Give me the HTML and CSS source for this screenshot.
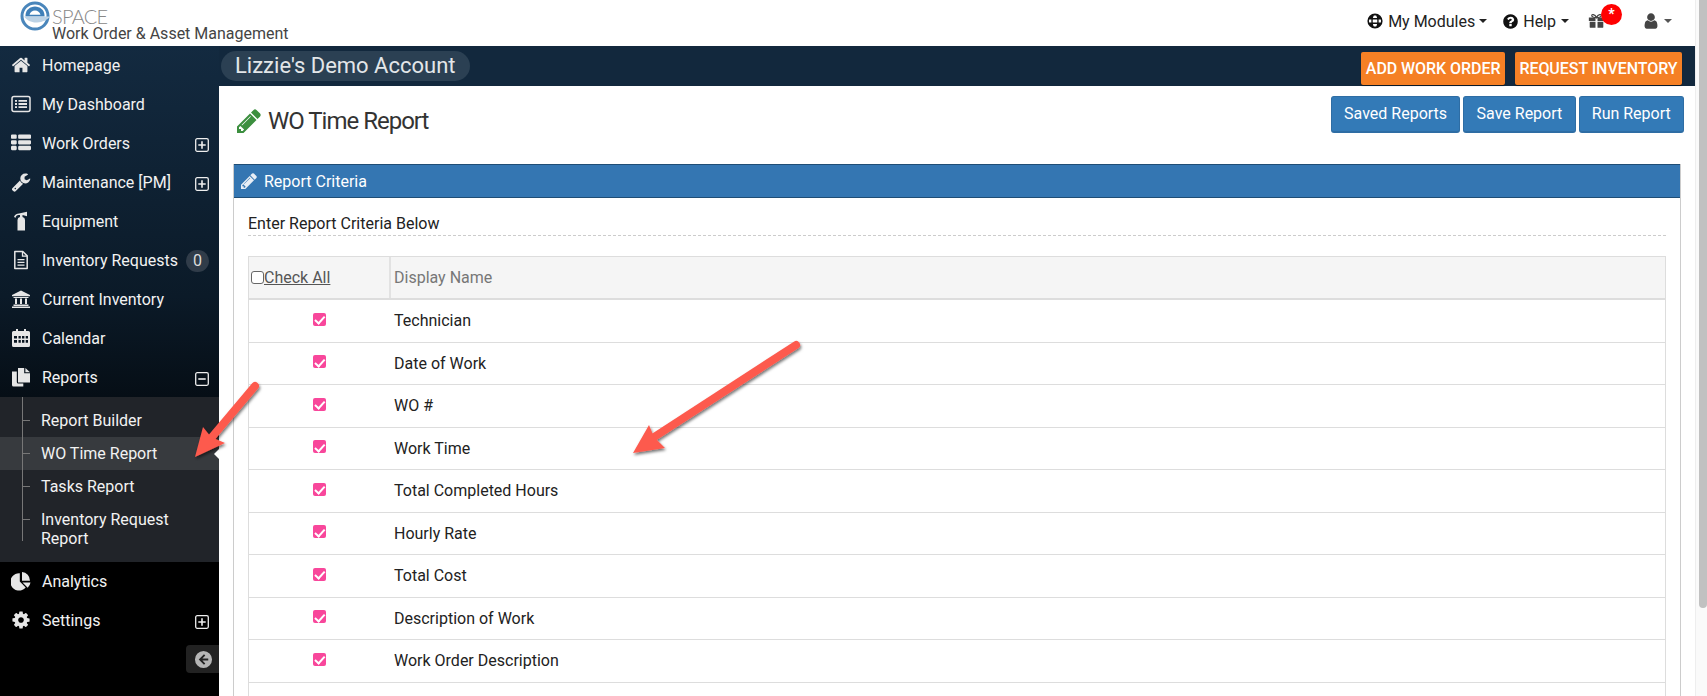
FILE: index.html
```html
<!DOCTYPE html>
<html lang="en">
<head>
<meta charset="utf-8">
<title>WO Time Report</title>
<link rel="stylesheet" href="styles.css">
</head>
<body>
<svg class="sprite" xmlns="http://www.w3.org/2000/svg">
  <symbol id="i-pencil" viewBox="128 128 1536 1536"><path d="M491 1536l91-91-235-235-91 91v107h128v128h107zm523-928q0-22-22-22-10 0-17 7l-542 542q-7 7-7 17 0 22 22 22 10 0 17-7l542-542q7-7 7-17zm-54-192l416 416-832 832h-416v-416zm683 96q0 53-37 90l-166 166-416-416 166-165q36-38 90-38 53 0 91 38l235 234q37 39 37 91z"/></symbol>
  <symbol id="i-home" viewBox="0 0 1792 1792"><path d="M1472 992v480q0 26-19 45t-45 19h-384v-384h-256v384h-384q-26 0-45-19t-19-45v-480q0-1 .5-3t.5-3l575-474 575 474q1 2 1 6zm223-69l-62 74q-8 9-21 11h-3q-13 0-21-7l-692-577-692 577q-12 8-24 7-13-2-21-11l-62-74q-8-10-7-23.500t11-21.500l719-599q32-26 76-26t76 26l244 204v-195q0-14 9-23t23-9h192q14 0 23 9t9 23v408l219 182q10 8 11 21.500t-7 23.500z"/></symbol>
  <symbol id="i-list" viewBox="0 0 1792 1792"><path d="M512 1248v192q0 40-28 68t-68 28h-320q-40 0-68-28t-28-68v-192q0-40 28-68t68-28h320q40 0 68 28t28 68zm0-512v192q0 40-28 68t-68 28h-320q-40 0-68-28t-28-68v-192q0-40 28-68t68-28h320q40 0 68 28t28 68zm1280 512v192q0 40-28 68t-68 28h-960q-40 0-68-28t-28-68v-192q0-40 28-68t68-28h960q40 0 68 28t28 68zm-1280-1024v192q0 40-28 68t-68 28h-320q-40 0-68-28t-28-68v-192q0-40 28-68t68-28h320q40 0 68 28t28 68zm1280 512v192q0 40-28 68t-68 28h-960q-40 0-68-28t-28-68v-192q0-40 28-68t68-28h960q40 0 68 28t28 68zm0-512v192q0 40-28 68t-68 28h-960q-40 0-68-28t-28-68v-192q0-40 28-68t68-28h960q40 0 68 28t28 68z"/></symbol>
  <symbol id="i-wrench" viewBox="0 0 1792 1792"><path d="M448 1472q0-26-19-45t-45-19-45 19-19 45 19 45 45 19 45-19 19-45zm644-420l-682 682q-37 37-90 37-52 0-91-37l-106-108q-38-36-38-90 0-53 38-91l681-681q39 98 114.500 173.500t173.500 114.500zm634-435q0 39-23 106-47 134-164.500 217.500t-258.500 83.500q-185 0-316.500-131.500t-131.500-316.500 131.500-316.500 316.500-131.500q58 0 121.500 16.500t107.500 46.500q16 11 16 28t-16 28l-293 169v224l193 107q5-3 79-48.500t135.500-81 70.500-35.500q15 0 23.500 10t8.500 25z"/></symbol>
  <symbol id="i-gear" viewBox="0 0 1792 1792"><path d="M1152 896q0-106-75-181t-181-75-181 75-75 181 75 181 181 75 181-75 75-181zm512-109v222q0 12-8 23t-20 13l-185 28q-19 54-39 91 35 50 107 138 10 12 10 25t-9 23q-27 37-99 108t-94 71q-12 0-26-9l-138-108q-44 23-91 38-16 136-29 186-7 28-36 28h-222q-14 0-24.500-8.500t-11.500-21.500l-28-184q-49-16-90-37l-141 107q-10 9-25 9-14 0-25-11-126-114-165-168-7-10-7-23 0-12 8-23 15-21 51-66.500t54-70.500q-27-50-41-99l-183-27q-13-2-21-12.500t-8-23.500v-222q0-12 8-23t19-13l186-28q14-46 39-92-40-57-107-138-10-12-10-24 0-10 9-23 26-36 98.500-107.500t94.500-71.500q13 0 26 10l138 107q44-23 91-38 16-136 29-186 7-28 36-28h222q14 0 24.500 8.500t11.500 21.500l28 184q49 16 90 37l142-107q9-9 24-9 13 0 25 10 129 119 165 170 7 8 7 22 0 12-8 23-15 21-51 66.500t-54 70.500q26 50 41 98l183 28q13 2 21 12.500t8 23.500z"/></symbol>
  <symbol id="i-user" viewBox="0 0 1792 1792"><path d="M1536 1399q0 109-62.500 187t-150.500 78h-854q-88 0-150.500-78t-62.500-187q0-85 8.500-160.500t31.500-152 58.500-131 94-89 134.500-34.500q131 128 313 128t313-128q76 0 134.500 34.500t94 89 58.500 131 31.500 152 8.500 160.500zm-256-887q0 159-112.500 271.500t-271.500 112.500-271.500-112.500-112.500-271.500 112.500-271.500 271.500-112.500 271.500 112.500 112.500 271.500z"/></symbol>
  <symbol id="i-help" viewBox="0 0 1792 1792"><path d="M1024 1376v-192q0-14-9-23t-23-9h-192q-14 0-23 9t-9 23v192q0 14 9 23t23 9h192q14 0 23-9t9-23zm256-672q0-88-55.500-163t-138.500-116-170-41q-243 0-371 213-15 24 8 42l132 100q7 6 19 6 16 0 25-12 53-68 86-92 34-24 86-24 48 0 85.500 26t37.500 59q0 38-20 61t-68 45q-63 28-115.500 86.500t-52.500 125.500v36q0 14 9 23t23 9h192q14 0 23-9t9-23q0-19 21.500-49.500t54.500-49.500q32-18 49-28.500t46-35 44.500-48 28-60.500 12.500-81zm384 192q0 209-103 385.500t-279.500 279.500-385.500 103-385.500-103-279.500-279.500-103-385.500 103-385.500 279.500-279.500 385.500-103 385.500 103 279.500 279.500 103 385.500z"/></symbol>
  <symbol id="i-dash" viewBox="0 0 20 20"><rect x="1" y="2.600" width="18" height="14.800" rx="2" fill="none" stroke="currentColor" stroke-width="1.500"/><path d="M4 6h2v1.800H4zm3.500 0H16v1.800H7.500zM4 9.100h2v1.800H4zm3.500 0H16v1.800H7.500zM4 12.200h2V14H4zm3.500 0H16V14H7.500z"/></symbol>
  <symbol id="i-ext" viewBox="0 0 20 20"><path d="M8 2.600 16 .8v4.400l-4.500-1.100 0 2a3 3 0 0 1 2.500 3V19.500H6.500V9.100a3 3 0 0 1 2.500-3V4.100L7.500 4C6 4 5 5 4.300 7L3 5.800C4 3.500 6 2.700 8 2.600z"/></symbol>
  <symbol id="i-file" viewBox="0 0 20 20"><path fill="none" stroke="currentColor" stroke-width="1.500" stroke-linejoin="round" d="M3.800 1.500h8l4.400 4.400v12.600H3.800z"/><path fill="none" stroke="currentColor" stroke-width="1.300" d="M11.500 1.500v4.700h4.700"/><path d="M6.500 9h7v1.300h-7zm0 2.700h7V13h-7zm0 2.700h7v1.300h-7z"/></symbol>
  <symbol id="i-bank" viewBox="0 0 20 20"><path d="M10 1.500 19 6v1.300H1V6zM2.500 8h15v1h-15zM4 9.500h2V15H4zm5 0h2V15H9zm5 0h2V15h-2zM2.500 15.500h15V17h-15zM1 17.400h18V19H1z"/></symbol>
  <symbol id="i-cal" viewBox="0 0 20 20"><path fill-rule="evenodd" d="M5 1h2v2h6V1h2v2h2.500A1.500 1.500 0 0 1 19 4.500v13a1.500 1.500 0 0 1-1.500 1.500h-15A1.500 1.500 0 0 1 1 17.500v-13A1.500 1.500 0 0 1 2.500 3H5zM3 8v2.500h3V8zm4.500 0v2.500h2.300V8zm3.500 0v2.500h2.400V8zm3.700 0v2.500H17V8zM3 12v2.700h3V12zm4.500 0v2.700h2.300V12zm3.500 0v2.700h2.400V12zm3.700 0v2.700H17V12z"/></symbol>
  <symbol id="i-copy" viewBox="0 0 20 20"><path d="M1 4.500h4.800V15a1.500 1.500 0 0 0 1.500 1.500h5V19.500H2.500A1.500 1.500 0 0 1 1 18z"/><path d="M7 1h6.200v5.300H19V15.500H7z"/><path d="M14.400 1 19 5.200h-4.600z"/></symbol>
  <symbol id="i-pie" viewBox="0 0 20 20"><path d="M8.800 2.200v8.400l5.900 5.900A8.700 8.700 0 1 1 8.800 2.200zM11 1a8.700 8.700 0 0 1 8 8.700h-8zM11.500 11.500h8a8.700 8.700 0 0 1-2.800 5.200z"/></symbol>
  <symbol id="i-plus" viewBox="0 0 14 14"><rect x=".7" y=".7" width="12.600" height="12.600" rx="1.500" fill="none" stroke="currentColor" stroke-width="1.300"/><path d="M6.200 3.300h1.600v2.900h2.900v1.600H7.800v2.900H6.200V7.800H3.300V6.200h2.900z"/></symbol>
  <symbol id="i-minus" viewBox="0 0 14 14"><rect x=".7" y=".7" width="12.600" height="12.600" rx="1.500" fill="none" stroke="currentColor" stroke-width="1.300"/><path d="M3.300 6.200h7.400v1.600H3.300z"/></symbol>
  <symbol id="i-globe" viewBox="0 0 20 20"><path fill-rule="evenodd" d="M10 .5a9.500 9.500 0 1 1 0 19 9.500 9.500 0 0 1 0-19zM8.600 3C8 4 7.600 5.100 7.400 6.300h5.200C12.400 5.100 12 4 11.400 3zM7.200 8c-.1 1.300-.1 2.700 0 4h5.600c.1-1.300.1-2.700 0-4zm.2 5.700c.2 1.200.6 2.300 1.200 3.300h2.800c.6-1 1-2.100 1.200-3.300zM2.700 8a8 8 0 0 0 0 4h2.800c-.1-1.300-.1-2.700 0-4zm11.800 0c.1 1.300.1 2.700 0 4h2.800a8 8 0 0 0 0-4z"/></symbol>
  <symbol id="i-gift" viewBox="0 0 20 18"><path d="M1 5h7.800v4H1zm10.200 0H19v4h-7.800zM2 10h6.800v7H3a1 1 0 0 1-1-1zm9.200 0H18v6a1 1 0 0 1-1 1h-5.800z"/><path fill="none" stroke="currentColor" stroke-width="1.500" d="M10 5C8 1 4 .5 4.500 3 5 4.500 8 5 10 5c2 0 5-.5 5.500-2C16 .5 12 1 10 5z"/></symbol>
  <symbol id="i-back" viewBox="0 0 20 20"><path fill-rule="evenodd" d="M10 1a9 9 0 1 1 0 18 9 9 0 0 1 0-18zm.5 3.500L5 10l5.500 5.500 1.400-1.400-3.100-3.100h6.200V9H8.800l3.100-3.100z"/></symbol>
</svg>

<div class="page">
  <div class="content">
    <header class="topnav">
      <div class="brand">
        <svg class="brand-mark" viewBox="0 0 30 30" aria-hidden="true">
          <circle cx="15" cy="15" r="13" fill="#fff" stroke="#4a86bb" stroke-width="3"/>
          <path d="M5.500 14c.3-5 4.500-8.500 9.500-8.500s9.200 3.500 9.500 8.500v1.500h-19z" fill="#3f7fb8"/>
          <path d="M9.500 13.800c.6-2.600 2.800-4.300 5.500-4.300s4.900 1.700 5.500 4.300z" fill="#fff"/>
          <path d="M4 15.500h26c-2.500 3.500-7.500 5.600-13 6-5.500.3-10-2-13-6z" fill="#bcd2e5"/>
        </svg>
        <div class="brand-text">
          <div class="brand-name">SPACE</div>
          <div class="brand-sub">Work Order &amp; Asset Management</div>
        </div>
      </div>
      <nav class="topnav-links">
        <span class="navlink link-modules"><svg class="ico-globe"><use href="#i-globe"/></svg>My Modules<i class="caret"></i></span>
        <span class="navlink link-help"><svg class="ico-help"><use href="#i-help"/></svg>Help<i class="caret"></i></span>
        <span class="navlink link-gift"><svg class="ico-gift"><use href="#i-gift"/></svg><b class="gift-badge">*</b></span>
        <span class="navlink link-user"><svg class="ico-user"><use href="#i-user"/></svg><i class="caret caret-grey"></i></span>
      </nav>
    </header>

    <div class="shell">
      <aside class="sidebar">
        <ul class="menu">
          <li class="menu-item"><svg class="mi"><use href="#i-home"/></svg>Homepage</li>
          <li class="menu-item"><svg class="mi"><use href="#i-dash"/></svg>My Dashboard</li>
          <li class="menu-item"><svg class="mi"><use href="#i-list"/></svg>Work Orders<svg class="toggle"><use href="#i-plus"/></svg></li>
          <li class="menu-item"><svg class="mi"><use href="#i-wrench"/></svg>Maintenance [PM]<svg class="toggle"><use href="#i-plus"/></svg></li>
          <li class="menu-item"><svg class="mi"><use href="#i-ext"/></svg>Equipment</li>
          <li class="menu-item"><svg class="mi"><use href="#i-file"/></svg>Inventory Requests<span class="count">0</span></li>
          <li class="menu-item"><svg class="mi"><use href="#i-bank"/></svg>Current Inventory</li>
          <li class="menu-item"><svg class="mi"><use href="#i-cal"/></svg>Calendar</li>
          <li class="menu-item"><svg class="mi"><use href="#i-copy"/></svg>Reports<svg class="toggle"><use href="#i-minus"/></svg></li>
          <li class="submenu-wrap">
            <ul class="submenu">
              <li class="sub-item">Report Builder</li>
              <li class="sub-item is-active">WO Time Report</li>
              <li class="sub-item">Tasks Report</li>
              <li class="sub-item">Inventory Request Report</li>
            </ul>
          </li>
          <li class="menu-item"><svg class="mi"><use href="#i-pie"/></svg>Analytics</li>
          <li class="menu-item"><svg class="mi"><use href="#i-gear"/></svg>Settings<svg class="toggle"><use href="#i-plus"/></svg></li>
        </ul>
        <div class="collapse-row"><span class="collapse-btn"><svg class="ico-back"><use href="#i-back"/></svg></span></div>
      </aside>

      <main class="main">
        <div class="accountbar">
          <div class="account-pill">Lizzie's Demo Account</div>
          <div class="account-actions">
            <a class="btn-orange">ADD WORK ORDER</a>
            <a class="btn-orange">REQUEST INVENTORY</a>
          </div>
        </div>
        <div class="titlebar">
          <h1 class="page-title"><svg class="title-ico"><use href="#i-pencil"/></svg>WO Time Report</h1>
          <div class="title-actions">
            <a class="btn-blue">Saved Reports</a>
            <a class="btn-blue">Save Report</a>
            <a class="btn-blue">Run Report</a>
          </div>
        </div>
        <section class="panel">
          <div class="panel-head"><svg class="panel-ico"><use href="#i-pencil"/></svg>Report Criteria</div>
          <div class="panel-body">
            <div class="panel-lead">Enter Report Criteria Below</div>
            <div class="grid">
              <div class="grid-row grid-head">
                <div class="cell cell-check"><input class="check-plain" type="checkbox"><u>Check All</u></div>
                <div class="cell">Display Name</div>
              </div>
              <div class="grid-row"><div class="cell cell-center"><input class="check-pink" type="checkbox" checked></div><div class="cell">Technician</div></div>
              <div class="grid-row"><div class="cell cell-center"><input class="check-pink" type="checkbox" checked></div><div class="cell">Date of Work</div></div>
              <div class="grid-row"><div class="cell cell-center"><input class="check-pink" type="checkbox" checked></div><div class="cell">WO #</div></div>
              <div class="grid-row"><div class="cell cell-center"><input class="check-pink" type="checkbox" checked></div><div class="cell">Work Time</div></div>
              <div class="grid-row"><div class="cell cell-center"><input class="check-pink" type="checkbox" checked></div><div class="cell">Total Completed Hours</div></div>
              <div class="grid-row"><div class="cell cell-center"><input class="check-pink" type="checkbox" checked></div><div class="cell">Hourly Rate</div></div>
              <div class="grid-row"><div class="cell cell-center"><input class="check-pink" type="checkbox" checked></div><div class="cell">Total Cost</div></div>
              <div class="grid-row"><div class="cell cell-center"><input class="check-pink" type="checkbox" checked></div><div class="cell">Description of Work</div></div>
              <div class="grid-row"><div class="cell cell-center"><input class="check-pink" type="checkbox" checked></div><div class="cell">Work Order Description</div></div>
              <div class="grid-row"><div class="cell"></div><div class="cell"></div></div>
            </div>
          </div>
        </section>
      </main>
    </div>
  </div>
  <div class="scrollbar"><div class="scroll-thumb"></div></div>

  <svg class="arrows" viewBox="0 0 1707 696" aria-hidden="true">
    <defs><filter id="arrow-shadow" x="-20%" y="-20%" width="140%" height="140%"><feDropShadow dx="1" dy="2" stdDeviation="1.500" flood-color="#000" flood-opacity=".55"/></filter></defs>
    <g filter="url(#arrow-shadow)" fill="#fd5a4e">
      <path d="M796 345 648 441" stroke="#fd5a4e" stroke-width="8" stroke-linecap="round"/>
      <path d="M633 453 649 425 654 437 665 448z"/>
      <path d="M255 386 207 443" stroke="#fd5a4e" stroke-width="8" stroke-linecap="round"/>
      <path d="M195 457 203 427 211 437 225 443z"/>
    </g>
  </svg>
</div>
</body>
</html>
```
FILE: styles.css
```css
* { box-sizing: border-box; }
html, body { margin: 0; height: 100%; overflow: hidden; background: #fff; }
body { font-family: Roboto, "Liberation Sans", sans-serif; font-size: 16px; color: #222; }
ul { list-style: none; margin: 0; padding: 0; }
.sprite { position: absolute; width: 0; height: 0; }
svg { fill: currentColor; }

.page { display: flex; height: 696px; position: relative; }
.content { flex: 1; min-width: 0; display: flex; flex-direction: column; }

/* top navigation */
.topnav { height: 46px; display: flex; justify-content: space-between; padding-left: 20px; flex: none; }
.brand { display: flex; align-items: flex-start; }
.brand-mark { width: 30px; height: 30px; flex: none; margin-top: 1px; }
.brand-text { margin-left: 2px; }
.brand-name { font-family: Lato, sans-serif; font-weight: 300; font-size: 20px; line-height: 20px; color: #888; margin-top: 6px; height: 20px; letter-spacing: -.8px; }
.brand-sub { font-size: 16px; line-height: 16px; color: #444; white-space: nowrap; }
.topnav-links { display: flex; align-items: flex-start; color: #222; }
.navlink { display: flex; align-items: center; height: 20px; margin-top: 11px; white-space: nowrap; position: relative; }
.link-modules svg { margin-right: 5px; }
.link-help { margin-left: 15px; }
.link-help svg { margin-right: 4px; }
.link-help .caret { margin-left: 5px; }
.link-gift { margin-left: 19px; width: 34px; }
.link-user { margin-left: 20px; margin-right: 23px; }
.ico-globe { width: 16px; height: 16px; color: #111; }
.ico-help { width: 17px; height: 17px; color: #111; }
.ico-gift { width: 17px; height: 16px; color: #444; }
.ico-user { width: 18px; height: 18px; color: #444; }
.caret { width: 0; height: 0; margin-left: 4px; border: 4px solid transparent; border-top-color: #222; border-bottom: 0; }
.caret-grey { border-top-color: #555; }
.gift-badge { position: absolute; left: 13px; top: -7px; width: 21px; height: 21px; border-radius: 50%; background: #f00; color: #fff; font-size: 14px; line-height: 20px; text-align: center; font-weight: 700; }

/* shell */
.shell { flex: 1; display: flex; min-height: 0; }
.sidebar { width: 219px; flex: none; background: linear-gradient(#132a40 0, #0b1a28 250px, #000 470px); color: #f2f2f2; position: relative; }
.menu-item { height: 39px; display: flex; align-items: center; padding-left: 42px; position: relative; white-space: nowrap; }
.mi { position: absolute; left: 11px; top: 9px; width: 20px; height: 20px; color: #e6e6e6; }
.toggle { position: absolute; left: 195px; top: 14px; width: 14px; height: 14px; color: #eee; }
.count { position: absolute; left: 186px; top: 9px; width: 23px; height: 22px; border-radius: 11px; background: #303c49; color: #ddd; text-align: center; line-height: 22px; }
.submenu-wrap { background: #212429; padding: 7px 0 7px; }
.submenu { position: relative; }
.submenu::before { content: ""; position: absolute; z-index: 1; left: 22px; top: -7px; bottom: 14px; width: 1px; background: #777; }
.sub-item { position: relative; padding: 7px 10px 7px 41px; min-height: 33px; line-height: 19px; color: #f2f2f2; }
.sub-item::before { content: ""; position: absolute; left: 22px; top: 16px; width: 8px; height: 1px; background: #777; }
.sub-item.is-active { background: #373a3e; }
.sub-item.is-active::after { content: ""; position: absolute; right: 0; top: 12px; border: 5px solid transparent; border-right-color: #fff; border-left: 0; }
.collapse-row { display: flex; justify-content: flex-end; margin-top: 5px; }
.collapse-btn { width: 33px; height: 28px; background: #222; border-radius: 4px 0 0 4px; display: flex; align-items: center; padding-left: 8px; }
.ico-back { width: 19px; height: 19px; color: #b5b5b5; }

/* main */
.main { flex: 1; min-width: 0; display: flex; flex-direction: column; }
.accountbar { height: 40px; flex: none; background: #12283d; display: flex; justify-content: space-between; padding: 5px 13px 0 2px; }
.account-pill { width: 249px; height: 30px; border-radius: 15px; background: #2b4053; color: #e3e6e9; font-size: 22px; line-height: 30px; padding-left: 14px; white-space: nowrap; }
.account-actions { display: flex; gap: 10px; padding-top: 1px; }
.btn-orange { height: 33px; line-height: 33px; padding: 0 4.500px; background: #f58025; color: #fff; font-weight: 500; letter-spacing: -.06px; border-radius: 2px; box-shadow: 0 1px 1px rgba(0,0,0,.4); white-space: nowrap; }
.titlebar { height: 78px; flex: none; display: flex; justify-content: space-between; align-items: flex-start; padding: 10px 11px 0 18px; }
.page-title { margin: 10px 0 0; font-size: 24px; font-weight: 400; line-height: 30px; color: #333; letter-spacing: -1px; display: flex; align-items: center; white-space: nowrap; }
.title-ico { width: 24px; height: 24px; color: #3c8f3f; margin-right: 7px; }
.title-actions { display: flex; gap: 3px; }
.btn-blue { height: 37px; line-height: 34px; padding: 0 12.250px; background: #337ab7; color: #fff; border: 1px solid #2e6da4; border-bottom-width: 2px; border-radius: 3px; white-space: nowrap; }

.panel { margin: 0 14px; flex: 1; min-height: 0; border: 1px solid #ccc; border-top: 0; border-bottom: 0; overflow: hidden; }
.panel-head { height: 34px; margin: 0 -1px; background: #3476b2; border: 1px solid #1f4d75; color: #fff; display: flex; align-items: center; padding-left: 7px; }
.panel-ico { width: 16px; height: 16px; margin-right: 7px; color: #e8eef5; }
.panel-body { padding: 0 14px; }
.panel-lead { height: 38px; padding-top: 16px; line-height: 19px; border-bottom: 1px dashed #ccc; color: #222; }
.grid { margin-top: 20px; border: 1px solid #ddd; border-bottom: 0; }
.grid-row { display: grid; grid-template-columns: 142px 1fr; height: 42.500px; border-bottom: 1px solid #ddd; }
.grid-head { height: 43px; background: #f5f5f5; color: #777; border-bottom-width: 2px; }
.grid-head .cell:first-child { border-right: 2px solid #e2e2e2; }
.cell { display: flex; align-items: center; padding-left: 3px; }
.cell-center { justify-content: center; padding-left: 0; }
.cell-check { color: #555; padding-left: 2px; }
.check-plain { appearance: none; width: 13px; height: 13px; margin: 0; border: 1px solid #666; border-radius: 3px; background: #fff; }
.check-pink { appearance: none; position: relative; width: 13px; height: 13px; margin: 0 2px 3px 0; background: #f8479b; border-radius: 2px; }
.check-pink::after { content: ""; position: absolute; left: 4.500px; top: 1.500px; width: 4px; height: 7.500px; border: solid #fff; border-width: 0 2px 2px 0; transform: rotate(42deg); }

.scrollbar { width: 12px; flex: none; background: #fafafa; border-left: 1px solid #eee; padding-left: 3px; }
.scroll-thumb { height: 608px; width: 8px; background: #c1c1c1; border-radius: 0 0 4px 4px; }

.arrows { position: absolute; inset: 0; width: 1707px; height: 696px; pointer-events: none; }
```
